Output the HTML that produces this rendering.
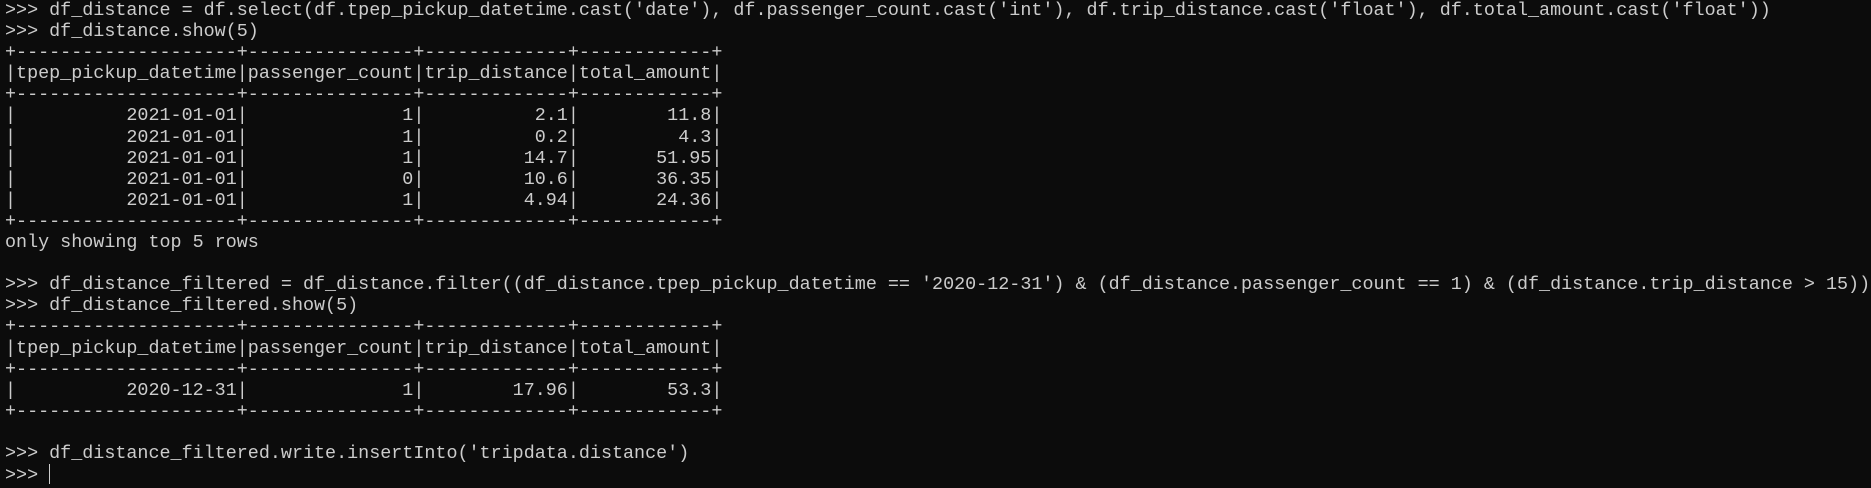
<!DOCTYPE html>
<html><head><meta charset="utf-8"><style>
html,body{margin:0;padding:0;background:#0c0c0c;width:1871px;height:488px;overflow:hidden}
pre{margin:0;position:absolute;left:5px;top:0px;font-family:"Liberation Mono",monospace;font-size:18.4px;line-height:21.1px;color:#cccccc;white-space:pre}
.cur{display:inline-block;width:1px;height:20px;background:#ccc;vertical-align:-4px}
</style></head><body><pre>&gt;&gt;&gt; df_distance = df.select(df.tpep_pickup_datetime.cast('date'), df.passenger_count.cast('int'), df.trip_distance.cast('float'), df.total_amount.cast('float'))
&gt;&gt;&gt; df_distance.show(5)
+--------------------+---------------+-------------+------------+
|tpep_pickup_datetime|passenger_count|trip_distance|total_amount|
+--------------------+---------------+-------------+------------+
|          2021-01-01|              1|          2.1|        11.8|
|          2021-01-01|              1|          0.2|         4.3|
|          2021-01-01|              1|         14.7|       51.95|
|          2021-01-01|              0|         10.6|       36.35|
|          2021-01-01|              1|         4.94|       24.36|
+--------------------+---------------+-------------+------------+
only showing top 5 rows

&gt;&gt;&gt; df_distance_filtered = df_distance.filter((df_distance.tpep_pickup_datetime == '2020-12-31') &amp; (df_distance.passenger_count == 1) &amp; (df_distance.trip_distance &gt; 15))
&gt;&gt;&gt; df_distance_filtered.show(5)
+--------------------+---------------+-------------+------------+
|tpep_pickup_datetime|passenger_count|trip_distance|total_amount|
+--------------------+---------------+-------------+------------+
|          2020-12-31|              1|        17.96|        53.3|
+--------------------+---------------+-------------+------------+

&gt;&gt;&gt; df_distance_filtered.write.insertInto('tripdata.distance')
&gt;&gt;&gt; <span class="cur"></span></pre></body></html>
